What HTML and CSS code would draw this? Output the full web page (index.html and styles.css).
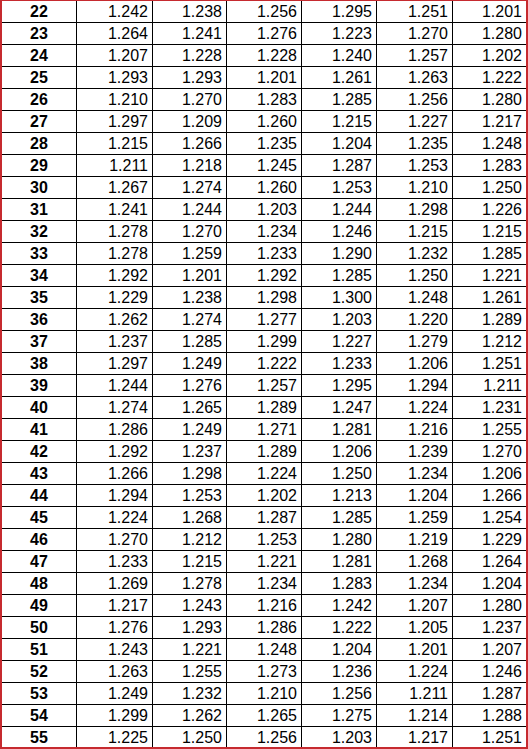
FILE: index.html
```html
<!DOCTYPE html>
<html>
<head>
<meta charset="utf-8">
<link rel="stylesheet" href="styles.css">
</head>
<body>
<div class="frame">
<div class="sheet">
<div class="k">22</div><div class="v">1.242</div><div class="v">1.238</div><div class="v">1.256</div><div class="v">1.295</div><div class="v">1.251</div><div class="v">1.201</div>
<div class="k">23</div><div class="v">1.264</div><div class="v">1.241</div><div class="v">1.276</div><div class="v">1.223</div><div class="v">1.270</div><div class="v">1.280</div>
<div class="k">24</div><div class="v">1.207</div><div class="v">1.228</div><div class="v">1.228</div><div class="v">1.240</div><div class="v">1.257</div><div class="v">1.202</div>
<div class="k">25</div><div class="v">1.293</div><div class="v">1.293</div><div class="v">1.201</div><div class="v">1.261</div><div class="v">1.263</div><div class="v">1.222</div>
<div class="k">26</div><div class="v">1.210</div><div class="v">1.270</div><div class="v">1.283</div><div class="v">1.285</div><div class="v">1.256</div><div class="v">1.280</div>
<div class="k">27</div><div class="v">1.297</div><div class="v">1.209</div><div class="v">1.260</div><div class="v">1.215</div><div class="v">1.227</div><div class="v">1.217</div>
<div class="k">28</div><div class="v">1.215</div><div class="v">1.266</div><div class="v">1.235</div><div class="v">1.204</div><div class="v">1.235</div><div class="v">1.248</div>
<div class="k">29</div><div class="v">1.211</div><div class="v">1.218</div><div class="v">1.245</div><div class="v">1.287</div><div class="v">1.253</div><div class="v">1.283</div>
<div class="k">30</div><div class="v">1.267</div><div class="v">1.274</div><div class="v">1.260</div><div class="v">1.253</div><div class="v">1.210</div><div class="v">1.250</div>
<div class="k">31</div><div class="v">1.241</div><div class="v">1.244</div><div class="v">1.203</div><div class="v">1.244</div><div class="v">1.298</div><div class="v">1.226</div>
<div class="k">32</div><div class="v">1.278</div><div class="v">1.270</div><div class="v">1.234</div><div class="v">1.246</div><div class="v">1.215</div><div class="v">1.215</div>
<div class="k">33</div><div class="v">1.278</div><div class="v">1.259</div><div class="v">1.233</div><div class="v">1.290</div><div class="v">1.232</div><div class="v">1.285</div>
<div class="k">34</div><div class="v">1.292</div><div class="v">1.201</div><div class="v">1.292</div><div class="v">1.285</div><div class="v">1.250</div><div class="v">1.221</div>
<div class="k">35</div><div class="v">1.229</div><div class="v">1.238</div><div class="v">1.298</div><div class="v">1.300</div><div class="v">1.248</div><div class="v">1.261</div>
<div class="k">36</div><div class="v">1.262</div><div class="v">1.274</div><div class="v">1.277</div><div class="v">1.203</div><div class="v">1.220</div><div class="v">1.289</div>
<div class="k">37</div><div class="v">1.237</div><div class="v">1.285</div><div class="v">1.299</div><div class="v">1.227</div><div class="v">1.279</div><div class="v">1.212</div>
<div class="k">38</div><div class="v">1.297</div><div class="v">1.249</div><div class="v">1.222</div><div class="v">1.233</div><div class="v">1.206</div><div class="v">1.251</div>
<div class="k">39</div><div class="v">1.244</div><div class="v">1.276</div><div class="v">1.257</div><div class="v">1.295</div><div class="v">1.294</div><div class="v">1.211</div>
<div class="k">40</div><div class="v">1.274</div><div class="v">1.265</div><div class="v">1.289</div><div class="v">1.247</div><div class="v">1.224</div><div class="v">1.231</div>
<div class="k">41</div><div class="v">1.286</div><div class="v">1.249</div><div class="v">1.271</div><div class="v">1.281</div><div class="v">1.216</div><div class="v">1.255</div>
<div class="k">42</div><div class="v">1.292</div><div class="v">1.237</div><div class="v">1.289</div><div class="v">1.206</div><div class="v">1.239</div><div class="v">1.270</div>
<div class="k">43</div><div class="v">1.266</div><div class="v">1.298</div><div class="v">1.224</div><div class="v">1.250</div><div class="v">1.234</div><div class="v">1.206</div>
<div class="k">44</div><div class="v">1.294</div><div class="v">1.253</div><div class="v">1.202</div><div class="v">1.213</div><div class="v">1.204</div><div class="v">1.266</div>
<div class="k">45</div><div class="v">1.224</div><div class="v">1.268</div><div class="v">1.287</div><div class="v">1.285</div><div class="v">1.259</div><div class="v">1.254</div>
<div class="k">46</div><div class="v">1.270</div><div class="v">1.212</div><div class="v">1.253</div><div class="v">1.280</div><div class="v">1.219</div><div class="v">1.229</div>
<div class="k">47</div><div class="v">1.233</div><div class="v">1.215</div><div class="v">1.221</div><div class="v">1.281</div><div class="v">1.268</div><div class="v">1.264</div>
<div class="k">48</div><div class="v">1.269</div><div class="v">1.278</div><div class="v">1.234</div><div class="v">1.283</div><div class="v">1.234</div><div class="v">1.204</div>
<div class="k">49</div><div class="v">1.217</div><div class="v">1.243</div><div class="v">1.216</div><div class="v">1.242</div><div class="v">1.207</div><div class="v">1.280</div>
<div class="k">50</div><div class="v">1.276</div><div class="v">1.293</div><div class="v">1.286</div><div class="v">1.222</div><div class="v">1.205</div><div class="v">1.237</div>
<div class="k">51</div><div class="v">1.243</div><div class="v">1.221</div><div class="v">1.248</div><div class="v">1.204</div><div class="v">1.201</div><div class="v">1.207</div>
<div class="k">52</div><div class="v">1.263</div><div class="v">1.255</div><div class="v">1.273</div><div class="v">1.236</div><div class="v">1.224</div><div class="v">1.246</div>
<div class="k">53</div><div class="v">1.249</div><div class="v">1.232</div><div class="v">1.210</div><div class="v">1.256</div><div class="v">1.211</div><div class="v">1.287</div>
<div class="k">54</div><div class="v">1.299</div><div class="v">1.262</div><div class="v">1.265</div><div class="v">1.275</div><div class="v">1.214</div><div class="v">1.288</div>
<div class="k">55</div><div class="v">1.225</div><div class="v">1.250</div><div class="v">1.256</div><div class="v">1.203</div><div class="v">1.217</div><div class="v">1.251</div>
</div>
</div>
</body>
</html>
```

FILE: styles.css
```css
html, body {
  margin: 0;
  padding: 0;
  background: #ffffff;
}

.frame {
  width: 524px;
  border-style: solid;
  border-color: #c62a2f;
  border-width: 1px 2px 2px 2px;
}

.sheet {
  display: grid;
  grid-template-columns: 74px 75px 73px 74px 74px 75px 73px;
  grid-template-rows: repeat(33, 21px) 20px;
  gap: 1px;
  background: #000000;
  font-family: "Liberation Sans", Arial, sans-serif;
  font-size: 16px;
  color: #000000;
}

.k, .v {
  background: #ffffff;
  line-height: 21px;
  height: 100%;
  overflow: hidden;
  white-space: nowrap;
}

.k {
  font-weight: bold;
  text-align: center;
}

.v {
  text-align: right;
  padding-right: 4px;
}
```
